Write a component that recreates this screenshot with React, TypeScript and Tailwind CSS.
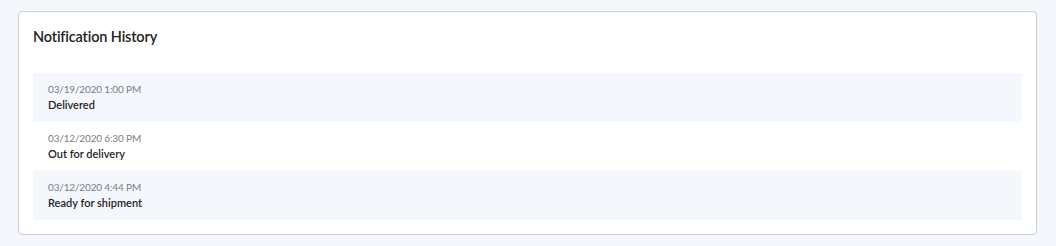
const items = [
  { time: "03/19/2020 1:00 PM", status: "Delivered" },
  { time: "03/12/2020 6:30 PM", status: "Out for delivery" },
  { time: "03/12/2020 4:44 PM", status: "Ready for shipment" },
];

export default function App() {
  return (
    <div
      className="min-h-[246px] bg-[#f4f8fd] pt-[11px] pl-[18px] pr-[19px] pb-[11px]"
      style={{ fontFamily: "Lato, 'Noto Sans', sans-serif" }}
    >
      <div className="bg-white border border-[#c9ccd1] rounded-[4px] px-[14px] pb-[14px]">
        <h2 className="pt-[15px] text-[14.5px] leading-[20px] tracking-[-0.15px] font-semibold text-[#222]">
          Notification History
        </h2>

        <div className="mt-[26px]">
          {items.map((item, i) => (
            <div
              key={item.time}
              className={
                "h-[49px] pl-[15px] pt-[9px] " + (i % 2 === 0 ? "bg-[#f4f8fd]" : "bg-white")
              }
            >
              <div className="text-[10px] leading-[14px] tracking-[-0.15px] text-[#7a7d82]">
                {item.time}
              </div>
              <div className="mt-[2px] text-[11px] leading-[14px] font-semibold text-[#1f2226]">
                {item.status}
              </div>
            </div>
          ))}
        </div>
      </div>
    </div>
  );
}
